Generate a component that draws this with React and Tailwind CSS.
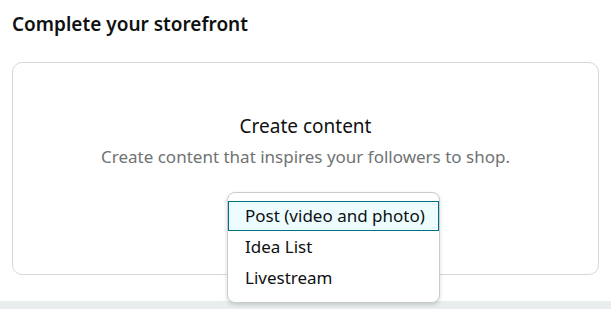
import React from "react";

function Menu() {
  const items = ["Post (video and photo)", "Idea List", "Livestream"];
  return (
    <div className="absolute left-[227px] top-[192px] w-[213px] h-[111px] bg-white border border-[#c9cccc] rounded-[8px] shadow-[0_2px_4px_rgba(0,0,0,0.15)] pt-[8px]">
      {items.map((item, i) => (
        <div
          key={item}
          className={
            i === 0
              ? "h-[30px] flex items-center pl-[16px] text-[17px] text-[#0f1111] bg-[#edfdff] border border-[#007185]"
              : "h-[31px] flex items-center pl-[17px] text-[17px] text-[#0f1111]"
          }
        >
          {item}
        </div>
      ))}
    </div>
  );
}

export default function App() {
  return (
    <div
      className="relative w-[611px] h-[309px] bg-white overflow-hidden"
      style={{ fontFamily: '"Noto Sans", Arial, sans-serif' }}
    >
      <div className="px-3 pt-[10px] h-[62px]">
        <h2 className="text-[19px] font-semibold text-[#0f1111] leading-[28px]">Complete your storefront</h2>
      </div>
      <div className="mx-3 h-[213px] border border-[#d5d9d9] rounded-[10px] flex flex-col items-center pt-[49px]">
        <div className="text-[19px] text-[#0f1111] leading-[28px]">Create content</div>
        <div className="mt-[5px] text-[17px] text-[#6f7373] leading-[24px]">
          Create content that inspires your followers to shop.
        </div>
      </div>
      <div className="absolute left-0 right-0 top-[301px] h-[8px] bg-[#e9eded]" />
      <Menu />
    </div>
  );
}
